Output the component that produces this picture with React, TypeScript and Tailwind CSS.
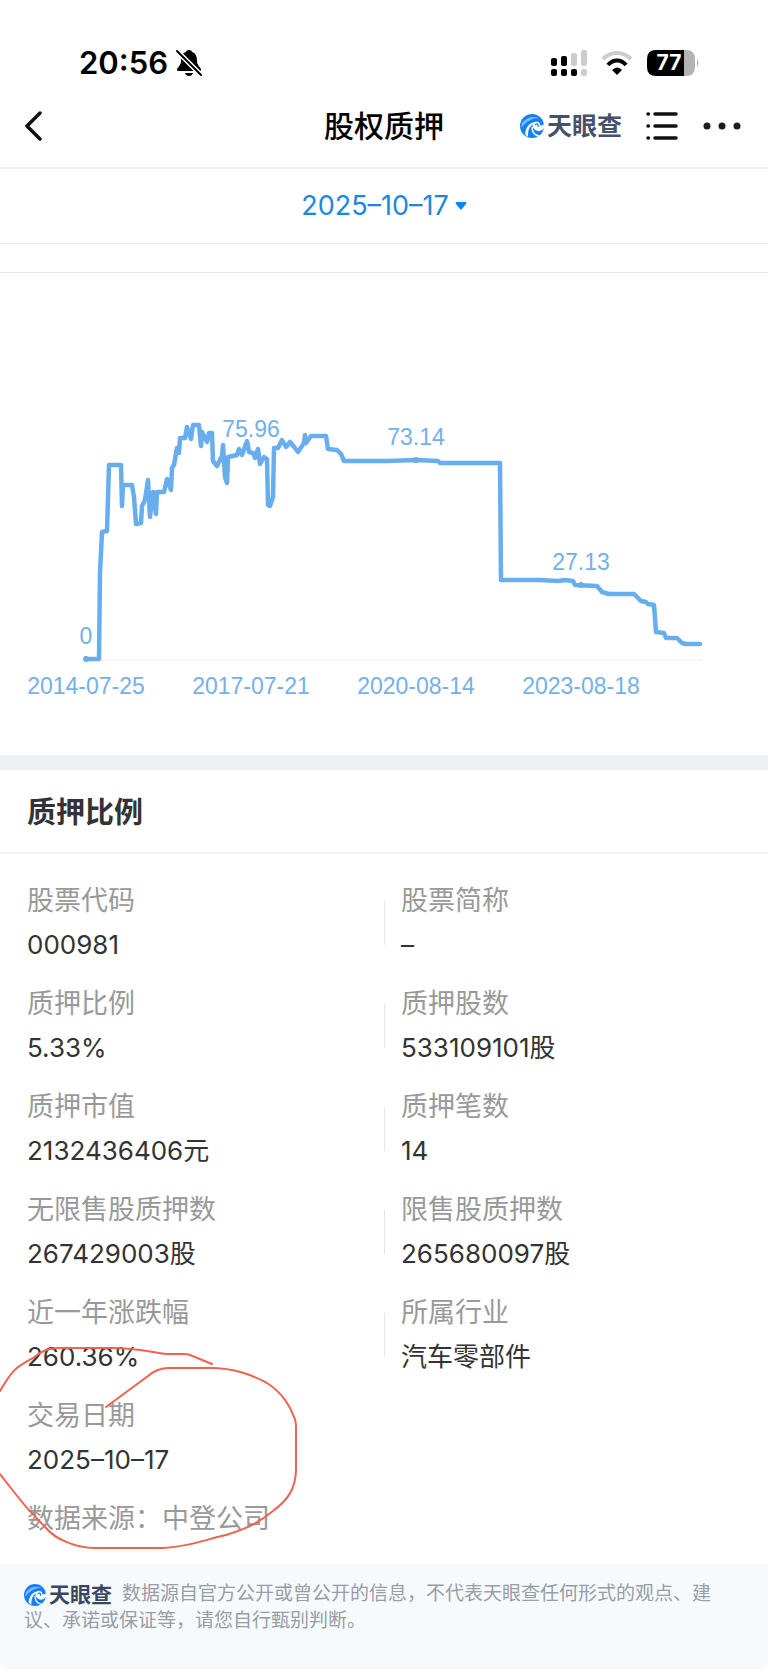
interface Field {
  label: string
  value: string
}

const ROWS: Field[][] = [
  [{ label: "股票代码", value: "000981" }, { label: "股票简称", value: "–" }],
  [{ label: "质押比例", value: "5.33%" }, { label: "质押股数", value: "533109101股" }],
  [{ label: "质押市值", value: "2132436406元" }, { label: "质押笔数", value: "14" }],
  [{ label: "无限售股质押数", value: "267429003股" }, { label: "限售股质押数", value: "265680097股" }],
  [{ label: "近一年涨跌幅", value: "260.36%" }, { label: "所属行业", value: "汽车零部件" }],
  [{ label: "交易日期", value: "2025–10–17" }],
]

// 图表数据点
const LINE =
  "86,659 99,659 100,573 102,532 107,531 109,465 121,465 122,506 123,485 132,485 134,497 136,524 141,523 142,506 145,500 148,480 150,517 153,492 156,514 157,492 164,492 167,479 171,490 172,468 174,465 177,448 179,453 180,438 185,438 187,427 191,439 193,425 199,425 201,446 202,432 207,442 209,433 212,433 213,461 217,466 222,456 223,445 225,477 227,483 228,457 237,455 239,449 242,455 247,441 249,452 253,453 255,458 258,449 260,464 264,457 267,459 268,505 270,506 273,497 274,448 278,448 282,440 286,447 290,442 295,448 298,452 304,443 305,435 306,443 311,436 326,436 328,449 337,450 341,454 344,461 358,461 387,461 417,460 438,461 440,463 500,463 501,580 540,580 558,581 565,580 573,581 575,585 597,586 602,592 609,594 634,594 641,601 646,602 648,604 654,605 656,632 664,633 666,638 677,638 682,643 686,644 700,644"

const CHART_LABELS = [
  { x: 86, y: 644, value: "0", date: "2014-07-25" },
  { x: 251, y: 437, value: "75.96", date: "2017-07-21" },
  { x: 416, y: 445, value: "73.14", date: "2020-08-14" },
  { x: 581, y: 570, value: "27.13", date: "2023-08-18" },
]

const Logo = ({ small }: { small?: boolean }) => (
  <span className={small ? "inline-flex h-6 items-center gap-[3px] align-middle" : "flex items-center gap-[3px]"}>
    <svg viewBox="0 0 24 24" className={small ? "size-[22px]" : "size-6"} aria-hidden="true">
      <circle cx="12" cy="12" r="12" fill="#1580f5" />
      <path d="M2 9C7 3 13 2 19 4C12 4 7 7 1 14Z" fill="#fff" opacity=".45" />
      <path d="M5 20C6 13 9 9 15 8C19 7 20 9 20 11C22 12 24 11 24 9L24 14C21 18 17 18 14 15C12 13 12 11 14 10C9 12 8 16 8 23Z" fill="#fff" />
      <path d="M12 13C12 18 14 21 19 22" stroke="#fff" strokeWidth="1.4" fill="none" />
      <path d="M15 11C17 9 19 10 18 13" stroke="#1580f5" strokeWidth="1.3" fill="none" />
    </svg>
    <span className={small ? "text-[21px] leading-6 font-bold text-[#3b4660]" : "text-[25px] leading-8 font-bold text-[#46516b]"}>天眼查</span>
  </span>
)

const StatusBar = () => (
  <div className="flex h-[84px] items-end justify-between pr-[68px] pl-[79px]">
    <div className="flex items-center gap-2">
      <span className="text-[31px] leading-[42px] font-semibold">20:56</span>
      <svg viewBox="0 0 26 28" className="h-7 w-[26px]" aria-label="静音">
        <path d="M13 1C15 1 16 2 16 3C20 4 21 8 21 12C21 17 25 18 25 21Q25 22 24 22H2Q1 22 1 21C1 18 5 17 5 12C5 8 6 4 10 3C10 2 11 1 13 1Z" />
        <path d="M9 24H17Q16 27 13 27Q10 27 9 24Z" />
        <path d="M0 1L26 27" stroke="#fff" strokeWidth="5" />
        <path d="M1 2L25 26" stroke="#000" strokeWidth="2" strokeLinecap="round" />
      </svg>
    </div>
    <div className="flex h-[42px] items-center gap-[13px]">
      <svg viewBox="0 0 38 28" className="h-7 w-[38px]" aria-label="信号">
        <rect x="1" y="9" width="6" height="8" rx="2" />
        <rect x="11" y="7" width="6" height="10" rx="2" />
        <rect x="21" y="4" width="6" height="13" rx="2" fill="#ccc" />
        <rect x="31" y="1" width="6" height="16" rx="2" fill="#ccc" />
        <rect x="1" y="20" width="6" height="7" rx="2" />
        <rect x="11" y="20" width="6" height="7" rx="2" />
        <rect x="21" y="20" width="6" height="7" rx="2" />
        <rect x="31" y="20" width="6" height="7" rx="2" fill="#ccc" />
      </svg>
      <svg viewBox="0 0 32 24" className="h-6 w-8" fill="none" strokeWidth="4" aria-label="无线网络">
        <path d="M2 8C10 0 22 0 30 8" stroke="#ccc" />
        <path d="M7 14C12 8 20 8 25 14" stroke="#000" />
        <path d="M11 19Q16 14 21 19L16 24Z" fill="#000" />
      </svg>
      <svg viewBox="0 0 54 28" className="h-7 w-[54px]" aria-label="电量">
        <path d="M10 1H38V27H10Q1 27 1 18V10Q1 1 10 1Z" />
        <path d="M38 1H40Q49 1 49 10V18Q49 27 40 27H38Z" fill="#b3b3b3" />
        <path d="M51 10Q54 14 51 18Z" fill="#b3b3b3" />
        <text x="23" y="21" textAnchor="middle" className="text-[21px] font-bold" fill="#fff">77</text>
      </svg>
    </div>
  </div>
)

const NavBar = () => (
  <header className="grid h-[85px] grid-cols-[1fr_auto_1fr] items-center border-b-2 border-[#f2f2f2] px-6">
    <button type="button" aria-label="返回" className="justify-self-start">
      <svg viewBox="0 0 20 30" className="h-[30px] w-5" fill="none" stroke="#111" strokeWidth="3.5" strokeLinecap="round" strokeLinejoin="round">
        <path d="M16 2L3 15L16 28" />
      </svg>
    </button>
    <h1 className="text-[30px] leading-10 font-medium">股权质押</h1>
    <div className="flex items-center justify-end gap-6">
      <Logo />
      <button type="button" aria-label="列表">
        <svg viewBox="0 0 32 28" className="h-7 w-8" fill="none" stroke="#111" strokeWidth="3.5" strokeLinecap="round">
          <path d="M9 2H30M9 14H30M9 26H30M2 2H2.4M2 14H2.4M2 26H2.4" />
        </svg>
      </button>
      <button type="button" aria-label="更多">
        <svg viewBox="0 0 42 8" className="h-2 w-[42px]" fill="#1b1c24">
          <circle cx="5" cy="4" r="3.5" />
          <circle cx="20" cy="4" r="3.5" />
          <circle cx="35" cy="4" r="3.5" />
        </svg>
      </button>
    </div>
  </header>
)

const Chart = () => (
  <svg viewBox="0 273 768 482" className="block w-full" aria-label="质押比例走势">
    <path d="M86 660H702" stroke="#eee" strokeWidth="1" />
    <polyline points={LINE} fill="none" stroke="#68aeef" strokeWidth="4.5" strokeLinejoin="round" strokeLinecap="round" />
    <g fill="#68aeef">
      <circle cx="86" cy="659" r="3" />
      <circle cx="416" cy="460" r="3" />
      <circle cx="581" cy="585" r="3" />
    </g>
    <g fill="#74b0e8" textAnchor="middle" className="font-['Liberation_Sans',sans-serif] text-[23px]">
      {CHART_LABELS.map((item) => (
        <g key={item.date}>
          <text x={item.x} y={item.y}>{item.value}</text>
          <text x={item.x} y="694">{item.date}</text>
        </g>
      ))}
    </g>
  </svg>
)

const FieldItem = ({ field }: { field: Field }) => (
  <div className="leading-[44px]">
    <dt className="text-[27px] text-[#999]">{field.label}</dt>
    <dd className="text-[26px] text-[#333]">{field.value}</dd>
  </div>
)

export default function App() {
  return (
    <div className="overflow-hidden bg-white font-['Inter','Noto_Sans_CJK_SC',sans-serif] text-black">
      <StatusBar />
      <NavBar />

      <div className="flex h-[75px] items-center justify-center border-b border-[#e8e8e8]">
        <button type="button" className="flex items-center gap-[6px] text-[27px] leading-10 text-[#1c86e0]">
          2025–10–17
          <svg viewBox="0 0 12 8" className="h-2 w-3" fill="#0f82f5" aria-hidden="true">
            <path d="M1 0H11Q12 1 11 2L7 7Q6 8 5 7L1 2Q0 1 1 0Z" />
          </svg>
        </button>
      </div>
      <div className="h-[29px] border-b border-[#e8e8e8]" />

      <Chart />

      <div className="h-[15px] bg-[#eef1f3]" />
      <h2 className="border-b-2 border-[#f2f2f2] px-[27px] pt-[22px] pb-[18px] text-[29px] leading-[42px] font-bold text-[#333]">质押比例</h2>

      <section className="relative pt-[25px] pb-[23px]">
        <dl className="flex flex-col gap-[15px]">
          {ROWS.map((row) => (
            <div key={row[0].label} className="grid grid-cols-2 items-center">
              <div className="pl-[27px]">
                <FieldItem field={row[0]} />
              </div>
              {row[1] && (
                <div className="flex items-center gap-4">
                  <div className="h-11 w-px bg-[#e5e5e5]" />
                  <FieldItem field={row[1]} />
                </div>
              )}
            </div>
          ))}
        </dl>
        <p className="mt-[15px] pl-[27px] text-[27px] leading-[44px] text-[#999]">数据来源：中登公司</p>

        {/* 手写圈注 */}
        <svg viewBox="0 0 300 208" className="absolute bottom-3 left-0 w-[300px]" fill="none" stroke="#ee6352" strokeWidth="2" strokeLinecap="round" aria-hidden="true">
          <path d="M212 20L190 11Q187 10 183 10L167 10C150 8 135 4 113 4H59C45 4 40 9 33 14C15 24 13 25 0 47" />
          <path d="M106 63L148 32Q157 24 169 24H210C235 24 252 31 267 39C283 49 291 64 294 73Q296 77 296 84V125C296 147 285 158 273 167C256 181 242 186 226 191C207 195 190 203 163 204H95C76 204 55 195 46 184C37 174 30 169 14 148L0 130" />
        </svg>
      </section>

      <footer className="rounded-b-lg bg-[#f6fafc] px-6 pt-4 pb-[35px] text-[19px] leading-[27px] text-[#989da6]">
        <span className="mr-[10px]"><Logo small /></span>
        数据源自官方公开或曾公开的信息，不代表天眼查任何形式的观点、建议、承诺或保证等，请您自行甄别判断。
      </footer>
    </div>
  )
}
